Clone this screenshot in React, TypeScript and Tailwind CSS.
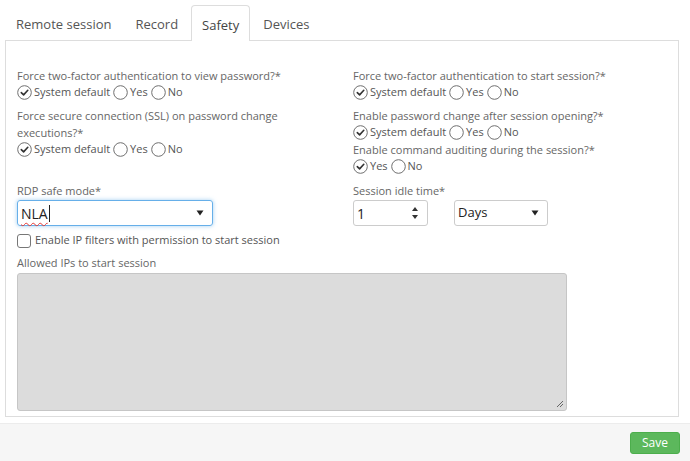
import React from 'react'

const FONT = { fontFamily: '"Open Sans", "Liberation Sans", sans-serif' }

function Radio({ checked, label }: { checked: boolean; label: string }) {
  return (
    <span className="inline-flex items-center gap-[2px] mr-[3px]">
      <svg width="15" height="15" viewBox="0 0 15 15" className="shrink-0">
        <circle cx="7.5" cy="7.5" r="6.8" fill="#fff" stroke="#6f6f6f" strokeWidth="1" />
        {checked && (
          <path d="M4.3 7.6 L6.6 9.9 L10.8 5.3" fill="none" stroke="#333" strokeWidth="1.6" strokeLinecap="round" strokeLinejoin="round" />
        )}
      </svg>
      <span>{label}</span>
    </span>
  )
}

function RadioRow({ options, selected }: { options: string[]; selected: number }) {
  return (
    <div className="flex items-center h-[17px] text-[11px] text-[#555]">
      {options.map((o, i) => (
        <Radio key={o} checked={i === selected} label={o} />
      ))}
    </div>
  )
}

function Label({ children }: { children: React.ReactNode }) {
  return <div className="text-[11px] leading-[17px] text-[#666]">{children}</div>
}

function Caret() {
  return (
    <svg width="8" height="6" viewBox="0 0 8 6">
      <path d="M0.5 0.5 L7.5 0.5 L4 5.5 Z" fill="#222" />
    </svg>
  )
}

const TABS = ['Remote session', 'Record', 'Safety', 'Devices']
const TRI = ['System default', 'Yes', 'No']

export default function App() {
  return (
    <div className="w-[690px] h-[461px] bg-white relative overflow-hidden" style={FONT}>
      {/* tabs */}
      <div className="flex pl-[5px] pt-[5px] h-[41px]">
        {TABS.map((t) => (
          <div
            key={t}
            className={
              t === 'Safety'
                ? 'px-[10px] pt-[5px] mr-[2px] h-[36px] flex items-center text-[13px] text-[#444] bg-white border border-b-0 border-[#ddd] rounded-t-[4px] relative z-10'
                : 'px-[10px] pt-[5px] mr-[2px] h-[35px] flex items-center text-[13px] text-[#555] border border-transparent'
            }
          >
            {t}
          </div>
        ))}
      </div>

      {/* panel */}
      <div className="ml-[5px] w-[674px] h-[377px] border border-[#ddd] -mt-px px-[11px] pt-[26px]">
        <div className="flex">
          <div className="w-[336px] shrink-0">
            <Label>Force two-factor authentication to view password?*</Label>
            <RadioRow options={TRI} selected={0} />
            <div className="mt-[6px]">
              <Label>
                Force secure connection (SSL) on password change
                <br />
                executions?*
              </Label>
              <RadioRow options={TRI} selected={0} />
            </div>
          </div>
          <div className="flex-1">
            <Label>Force two-factor authentication to start session?*</Label>
            <RadioRow options={TRI} selected={0} />
            <div className="mt-[6px]">
              <Label>Enable password change after session opening?*</Label>
              <RadioRow options={TRI} selected={0} />
              <Label>Enable command auditing during the session?*</Label>
              <RadioRow options={['Yes', 'No']} selected={0} />
            </div>
          </div>
        </div>

        <div className="flex mt-[7px]">
          <div className="w-[336px] shrink-0">
            <Label>RDP safe mode*</Label>
            <div className="mt-px w-[196px] h-[26px] rounded-[3px] border border-[#66afe9] shadow-[0_0_4px_rgba(102,175,233,0.6)] flex items-center justify-between pl-[3px] pr-[8px]">
              <span className="text-[14px] text-[#222] flex items-center">
                <span className="underline decoration-wavy decoration-[#e53935] decoration-1 underline-offset-[3px]">NLA</span>
                <span className="w-px h-[17px] bg-[#222] ml-px" />
              </span>
              <Caret />
            </div>
          </div>
          <div className="flex-1">
            <Label>Session idle time*</Label>
            <div className="mt-px flex gap-[26px]">
              <div className="w-[75px] h-[26px] rounded-[3px] border border-[#ccc] flex items-center justify-between pl-[3px] pr-[9px]">
                <span className="text-[14px] text-[#222]">1</span>
                <div className="flex flex-col gap-[4px]">
                  <svg width="6" height="4" viewBox="0 0 6 4"><path d="M0 4 L6 4 L3 0 Z" fill="#333" /></svg>
                  <svg width="6" height="4" viewBox="0 0 6 4"><path d="M0 0 L6 0 L3 4 Z" fill="#333" /></svg>
                </div>
              </div>
              <div className="w-[94px] h-[26px] rounded-[3px] border border-[#ccc] flex items-center justify-between pl-[3px] pr-[8px]">
                <span className="text-[13px] text-[#222]">Days</span>
                <Caret />
              </div>
            </div>
          </div>
        </div>

        <div className="flex items-center gap-[4px] mt-[7px] h-[15px]">
          <span className="w-[14px] h-[14px] rounded-[3px] border border-[#777] bg-white" />
          <span className="text-[11px] text-[#555]">Enable IP filters with permission to start session</span>
        </div>
        <div className="mt-[6px]">
          <Label>Allowed IPs to start session</Label>
        </div>
        <div className="mt-[2px] w-[550px] h-[138px] bg-[#dcdcdc] border border-[#c6c6c6] rounded-[3px] relative">
          <svg width="8" height="8" viewBox="0 0 8 8" className="absolute right-[2px] bottom-[2px]">
            <path d="M7 1 L1 7 M7 4 L4 7" stroke="#666" strokeWidth="1" />
          </svg>
        </div>
      </div>

      {/* footer */}
      <div className="absolute left-0 right-0 top-[423px] bottom-0 bg-[#f6f6f6] border-t border-[#ececec] flex items-start justify-end pr-[10px] pt-[8px]">
        <button className="w-[50px] h-[22px] rounded-[3px] bg-[#5cb85c] border border-[#4cae4c] text-white text-[12px] flex items-center justify-center">
          Save
        </button>
      </div>
    </div>
  )
}
